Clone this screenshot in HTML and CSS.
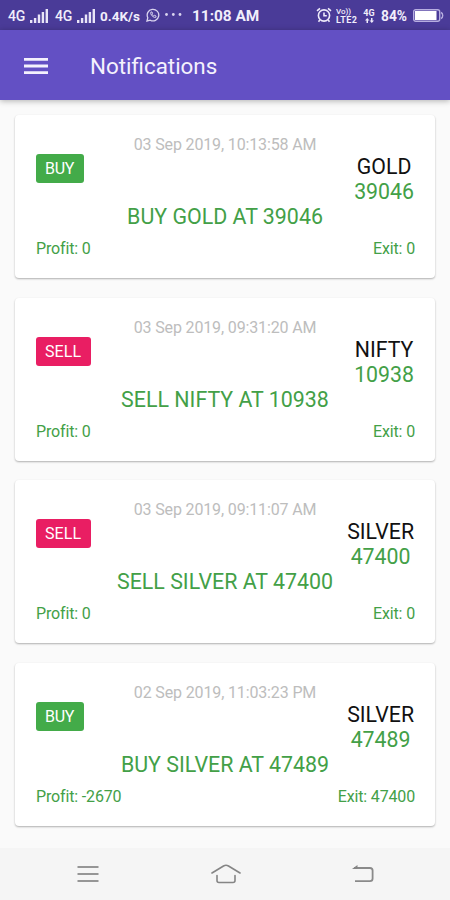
FILE: index.html
```
<!DOCTYPE html>
<html lang="en">
<head>
    <meta charset="UTF-8">
    <meta name="viewport" content="width=device-width, initial-scale=1.0">
    <title>Notifications</title>
    <link rel="stylesheet" href="styles.css">
</head>
<body>
    <div class="status-bar">
        <span class="network">4G</span>
        <svg class="signal" width="18" height="14" viewBox="0 0 18 14" fill="#e9e5f7">
            <path d="M0 11h2.4v3H0zM3.900 9h2.4v5H3.900zM7.800 5.500h2.400v8.500H7.800zM11.700 3h2.400v11h-2.400zM15.600 0H18v14h-2.400z"/>
        </svg>
        <span class="network second">4G</span>
        <svg class="signal" width="18" height="14" viewBox="0 0 18 14" fill="#e9e5f7">
            <path d="M0 11h2.4v3H0zM3.900 9h2.4v5H3.900zM7.800 5.500h2.400v8.500H7.800zM11.700 3h2.400v11h-2.400zM15.600 0H18v14h-2.400z"/>
        </svg>
        <span class="speed">0.4K/s</span>
        <svg class="whatsapp" width="14" height="14" viewBox="0 0 14 14" fill="none" stroke="#d9d4ef" stroke-width="1.300">
            <path d="M1 13l.8-3.300A5.800 5.800 0 1 1 4.200 12.200z"/>
            <path d="M4.800 4.200c-.6 2.400 2.400 5.600 4.900 5.200l.4-1.300-1.500-.8-.8.700C6.900 7.600 6.300 7 6 6.200l.6-.8-.7-1.500z" stroke-width="1"/>
        </svg>
        <svg class="dots" width="17" height="3" viewBox="0 0 17 3" fill="#d9d4ef">
            <circle cx="1.500" cy="1.500" r="1.400"/>
            <circle cx="8.300" cy="1.500" r="1.400"/>
            <circle cx="15" cy="1.500" r="1.400"/>
        </svg>
        <span class="time">11:08 AM</span>
        <svg class="alarm" width="16" height="16" viewBox="0 0 16 16" fill="none" stroke="#eeebfa" stroke-width="1.600">
            <circle cx="8" cy="8.500" r="5.600"/>
            <path d="M1 3.800L4 1.300M15 3.800L12 1.300M8 5.500v3.300h2.800M3.800 13l-1.300 1.700M12.200 13l1.300 1.700"/>
        </svg>
        <span class="lte"><span class="vo">Vo))</span><span>LTE2</span></span>
        <span class="data">
            <span>4G</span>
            <svg width="9" height="5" viewBox="0 0 9 5" fill="#eeebfa">
                <path d="M0 2.500L2.200 0l2.200 2.500H3V5H1.500V2.500zM4.600 2.500H6V0h1.500v2.500H9L6.800 5z"/>
            </svg>
        </span>
        <span class="percent">84%</span>
        <svg class="battery" width="31" height="13" viewBox="0 0 31 13">
            <rect x=".7" y=".7" width="26" height="11.600" rx="2" fill="none" stroke="#b7aee0" stroke-width="1.400"/>
            <rect x="2" y="2" width="21.500" height="9" fill="#fff"/>
            <path d="M28 3.500c2.300.8 2.300 5.200 0 6" fill="none" stroke="#b7aee0" stroke-width="1.400"/>
        </svg>
    </div>

    <div class="app-bar">
        <svg class="menu" width="24" height="16" viewBox="0 0 24 16" fill="#f4f1fd">
            <path d="M0 0h24v2.800H0zM0 6.600h24v2.800H0zM0 13.200h24V16H0z"/>
        </svg>
        <h1>Notifications</h1>
    </div>

    <div class="list">
        <div class="card">
            <div class="date">03 Sep 2019, 10:13:58 AM</div>
            <div class="row">
                <span class="badge buy">BUY</span>
                <div class="symbol"><span class="name">GOLD</span><span class="price">39046</span></div>
            </div>
            <div class="message">BUY GOLD AT 39046</div>
            <div class="footer"><span>Profit: 0</span><span>Exit: 0</span></div>
        </div>

        <div class="card">
            <div class="date">03 Sep 2019, 09:31:20 AM</div>
            <div class="row">
                <span class="badge sell">SELL</span>
                <div class="symbol"><span class="name">NIFTY</span><span class="price">10938</span></div>
            </div>
            <div class="message">SELL NIFTY AT 10938</div>
            <div class="footer"><span>Profit: 0</span><span>Exit: 0</span></div>
        </div>

        <div class="card">
            <div class="date">03 Sep 2019, 09:11:07 AM</div>
            <div class="row">
                <span class="badge sell">SELL</span>
                <div class="symbol"><span class="name">SILVER</span><span class="price">47400</span></div>
            </div>
            <div class="message">SELL SILVER AT 47400</div>
            <div class="footer"><span>Profit: 0</span><span>Exit: 0</span></div>
        </div>

        <div class="card">
            <div class="date">02 Sep 2019, 11:03:23 PM</div>
            <div class="row">
                <span class="badge buy">BUY</span>
                <div class="symbol"><span class="name">SILVER</span><span class="price">47489</span></div>
            </div>
            <div class="message">BUY SILVER AT 47489</div>
            <div class="footer"><span>Profit: -2670</span><span>Exit: 47400</span></div>
        </div>
    </div>

    <div class="nav-bar">
        <svg width="22" height="18" viewBox="0 0 22 18" fill="none" stroke="#969696" stroke-width="2">
            <path d="M.5 2h21M.5 9h21M.5 16h21"/>
        </svg>
        <svg width="30" height="20" viewBox="0 0 30 20" fill="none" stroke="#858585" stroke-width="1.600" stroke-linecap="round" stroke-linejoin="round">
            <path d="M1 9L12.500 2q2.500-1.400 5 0L29 9M6 11.500v5q0 2 2 2h14q2 0 2-2v-5"/>
        </svg>
        <svg width="22" height="18" viewBox="0 0 22 18" fill="none" stroke="#8a8a8a" stroke-width="1.800">
            <path d="M2 3h16q2.600 0 2.600 2.600v8q0 2.600-2.600 2.600H3"/>
            <path d="M0 3.900L5.500 0v3.900z" fill="#858585" stroke="none"/>
        </svg>
    </div>
</body>
</html>
```
FILE: styles.css
```
* {
    margin: 0;
    padding: 0;
    box-sizing: border-box;
}

body {
    font-family: Roboto, 'Liberation Sans', sans-serif;
    background: #fafafa;
    height: 900px;
    display: flex;
    flex-direction: column;
    overflow: hidden;
}

svg {
    display: block;
    flex-shrink: 0;
}

.status-bar {
    height: 30px;
    background: #4a3b98;
    color: #f1eefb;
    display: flex;
    align-items: center;
    padding: 2px 6px 0 8px;
    white-space: nowrap;
    flex-shrink: 0;
}

.network {
    width: 18px;
    font-size: 14px;
    font-weight: 500;
    letter-spacing: -0.3px;
}

.signal {
    margin-left: 4px;
    margin-top: -1px;
}

.second {
    margin-left: 7px;
}

.speed {
    margin-left: 5px;
    width: 41px;
    font-size: 13.5px;
    font-weight: 700;
}

.whatsapp {
    margin-left: 5px;
    margin-top: -3px;
}

.dots {
    margin-left: 5px;
    margin-top: -3px;
}

.time {
    margin-left: 10px;
    width: 68px;
    font-size: 15.4px;
    font-weight: 700;
}

.alarm {
    margin-left: 56px;
    margin-top: -2px;
}

.lte {
    margin-left: 4px;
    width: 23px;
    display: flex;
    flex-direction: column;
    font-size: 9px;
    line-height: 9px;
    font-weight: 700;
}

.lte span {
    height: 8px;
    line-height: 8px;
    overflow: hidden;
}

.lte span:last-child {
    letter-spacing: 0.4px;
}

.lte .vo {
    font-size: 8px;
    font-weight: 500;
}

.data {
    margin-left: 3px;
    width: 14px;
    display: flex;
    flex-direction: column;
    align-items: center;
    font-size: 9px;
    line-height: 9px;
    font-weight: 700;
}

.percent {
    margin-left: 5px;
    width: 27px;
    font-size: 13.8px;
    font-weight: 700;
}

.battery {
    margin-left: 5px;
    margin-top: -2px;
}

.app-bar {
    height: 70px;
    background: #6350c4;
    color: #f4f1fd;
    display: flex;
    align-items: center;
    padding: 0 24px;
    flex-shrink: 0;
    box-shadow: 0 1px 6px rgba(0, 0, 0, 0.3);
}

.menu {
    margin-top: 1px;
}

.app-bar h1 {
    margin-left: 42px;
    margin-top: 1px;
    font-size: 22.4px;
    font-weight: 400;
}

.list {
    flex: 1;
    padding: 15px 15px 0;
    display: flex;
    flex-direction: column;
    gap: 19.6px;
}

.card {
    height: 163px;
    flex-shrink: 0;
    padding: 20px 21px 0;
    background: #fff;
    border-radius: 4px;
    box-shadow: 0 1px 2px rgba(0, 0, 0, 0.3);
}

.date {
    line-height: 19px;
    font-size: 16px;
    letter-spacing: -0.14px;
    text-align: center;
    color: #bdbdbd;
}

.row {
    height: 50px;
    display: flex;
    justify-content: space-between;
    align-items: flex-start;
}

.badge {
    padding: 0 10px 0 9px;
    line-height: 29px;
    border-radius: 3px;
    color: #fff;
    font-size: 16px;
}

.buy {
    background: #43ab49;
    letter-spacing: -0.3px;
}

.sell {
    background: #e91e63;
    letter-spacing: 0.1px;
}

.symbol {
    display: flex;
    flex-direction: column;
    align-items: center;
    line-height: 25px;
    font-size: 21.3px;
}

.name {
    color: #111;
}

.price {
    color: #43a047;
}

.message {
    line-height: 26px;
    font-size: 21.4px;
    text-align: center;
    color: #43a047;
}

.footer {
    margin-top: 9px;
    margin-right: -1px;
    display: flex;
    justify-content: space-between;
    line-height: 20px;
    font-size: 16px;
    letter-spacing: -0.15px;
    color: #43a047;
}

.nav-bar {
    height: 52px;
    background: #f5f5f5;
    display: flex;
    justify-content: space-between;
    align-items: center;
    padding: 0 76px 0 77px;
    flex-shrink: 0;
}
```
